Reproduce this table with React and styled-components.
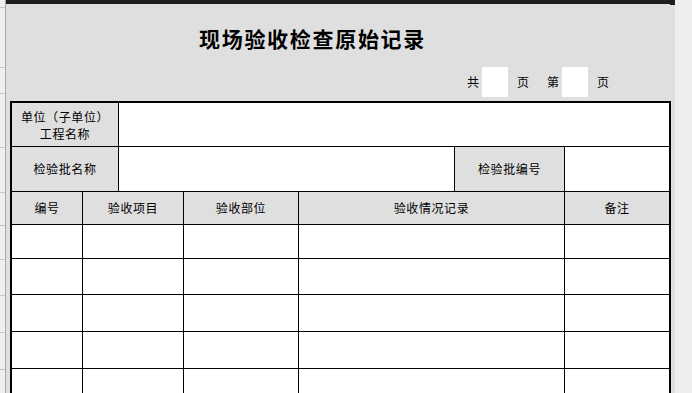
import React from 'react';
import styled, { createGlobalStyle } from 'styled-components';

const GlobalStyle = createGlobalStyle`
  html, body {
    margin: 0;
    padding: 0;
    background: #eeeeee;
    font-family: "Liberation Sans", "Noto Sans CJK SC", sans-serif;
    color: #000;
  }
`;

const stripLines = [7, 67, 93, 147, 192, 225, 259, 295, 332, 369];
const headCols = ['编号', '验收项目', '验收部位', '验收情况记录', '备注'];
const colWidths = '71px 101px 115px 266px 1fr';
const dataRows = [34, 36, 37, 37, 37];

const App = () => {
  return (
    <>
      <GlobalStyle />
      <Screen>
        <LeftStrip>
          {stripLines.map((y) => (
            <StripLine key={y} style={{ top: y }} />
          ))}
        </LeftStrip>
        <Sheet>
          <TopBar>
            <BarLine />
            <BarCap />
          </TopBar>
          <Title>现场验收检查原始记录</Title>
          <PageLine>
            <PageText>共</PageText>
            <PageBox />
            <PageText>页</PageText>
            <PageText $gap>第</PageText>
            <PageBox />
            <PageText>页</PageText>
          </PageLine>
          <Table>
            <Row $cols="107px 1fr" $h={44}>
              <Cell $label>
                <CellLine>单位（子单位）</CellLine>
                <CellLine>工程名称</CellLine>
              </Cell>
              <Cell $last />
            </Row>
            <Row $cols="107px 336px 110px 1fr" $h={45}>
              <Cell $label>检验批名称</Cell>
              <Cell />
              <Cell $label>检验批编号</Cell>
              <Cell $last />
            </Row>
            <Row $cols={colWidths} $h={33}>
              {headCols.map((c, i) => (
                <Cell key={c} $label $last={i === headCols.length - 1}>{c}</Cell>
              ))}
            </Row>
            {dataRows.map((h, r) => (
              <Row key={r} $cols={colWidths} $h={h}>
                {headCols.map((c, i) => (
                  <Cell key={c} $last={i === headCols.length - 1} />
                ))}
              </Row>
            ))}
          </Table>
        </Sheet>
        <RightStrip />
      </Screen>
    </>
  );
};

const Screen = styled.div`
  display: flex;
  width: 692px;
  height: 393px;
  overflow: hidden;
`;

const LeftStrip = styled.div`
  position: relative;
  width: 5px;
  flex-shrink: 0;
  background: #efefef;
  border-right: 1px solid #a9a9a9;
`;

const StripLine = styled.div`
  position: absolute;
  left: 0;
  width: 5px;
  height: 1px;
  background: #c6c6c6;
`;

const Sheet = styled.div`
  width: 669px;
  flex-shrink: 0;
  background: #dfdfdf;
  display: flex;
  flex-direction: column;
`;

const TopBar = styled.div`
  display: flex;
  align-items: flex-start;
  height: 5px;
`;

const BarLine = styled.div`
  width: 666px;
  height: 4px;
  background: #1e1e1e;
`;

const BarCap = styled.div`
  width: 5px;
  height: 5px;
  background: #1e1e1e;
`;

const Title = styled.div`
  margin: 19px 0 0 193px;
  height: 28px;
  line-height: 28px;
  font-family: "Noto Sans CJK SC", sans-serif;
  font-size: 21px;
  font-weight: 700;
  letter-spacing: 1.7px;
`;

const PageLine = styled.div`
  display: flex;
  align-items: center;
  margin: 15px 0 0 461px;
  height: 30px;
`;

const PageText = styled.span`
  font-family: "Noto Sans CJK SC", sans-serif;
  font-size: 12px;
  line-height: 30px;
  margin-left: ${(p) => (p.$gap ? '18px' : '0')};
`;

const PageBox = styled.div`
  width: 26px;
  height: 30px;
  background: #fff;
  margin: 0 9px 0 3px;
`;

const Table = styled.div`
  margin: 4px 0 0 4px;
  width: 657px;
  border: 2px solid #000;
  border-bottom: none;
  background: #fff;
`;

const Row = styled.div`
  display: grid;
  grid-template-columns: ${(p) => p.$cols};
  height: ${(p) => p.$h}px;
  border-bottom: 1px solid #000;
  box-sizing: border-box;
`;

const Cell = styled.div`
  display: flex;
  flex-direction: column;
  align-items: center;
  justify-content: center;
  background: ${(p) => (p.$label ? '#dfdfdf' : '#fff')};
  border-right: ${(p) => (p.$last ? 'none' : '1px solid #000')};
  font-family: "Noto Sans CJK SC", sans-serif;
  font-size: 12px;
  line-height: 14px;
  letter-spacing: 0.6px;
`;

const CellLine = styled.span`
  display: block;
  line-height: 17px;
`;

const RightStrip = styled.div`
  flex: 1;
  background: #eeeeee;
`;

export default App;
